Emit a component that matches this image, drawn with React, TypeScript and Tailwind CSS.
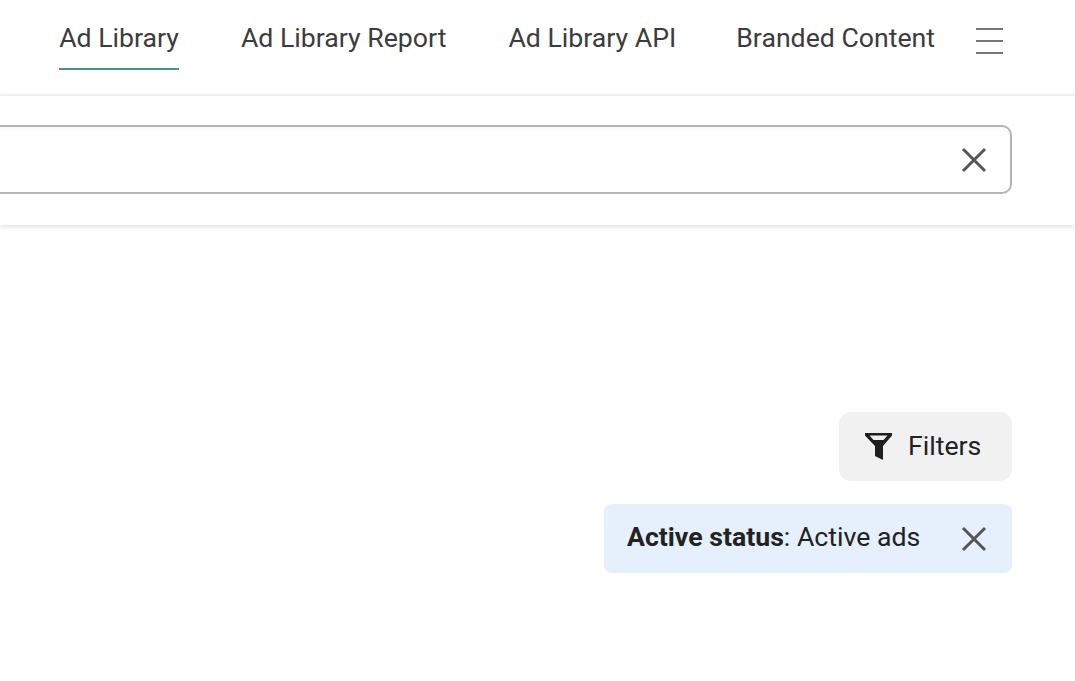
const navItems = ["Ad Library", "Ad Library Report", "Ad Library API", "Branded Content"];

function CloseIcon() {
  return (
    <svg width="28" height="28" viewBox="0 0 28 28" fill="none" stroke="#555555" strokeWidth="3">
      <path d="M3 3 L25 25 M25 3 L3 25" />
    </svg>
  );
}

export default function App() {
  return (
    <div className="h-[681px] w-[1075px] overflow-hidden bg-white font-['Roboto',sans-serif] text-[#3c3c3c]">
      <header className="flex h-[96px] items-start justify-end border-b-2 border-[#f3f3f3] pr-[72px]">
        <nav className="flex gap-[62px] pt-[21px]">
          {navItems.map((item, i) => (
            <a
              key={item}
              className={`block h-[49px] text-[26.67px] leading-[35px] ${i === 0 ? "border-b-2 border-[#4b8f91]" : ""} ${i === 3 ? "-ml-[2px]" : ""}`}
            >
              {item}
            </a>
          ))}
        </nav>
        <button className="ml-[41px] mt-[28px] flex h-[26px] w-[27px] flex-col justify-between">
          <span className="h-[2px] w-full bg-[#757575]" />
          <span className="h-[2px] w-full bg-[#757575]" />
          <span className="h-[2px] w-full bg-[#757575]" />
        </button>
      </header>

      <div className="flex h-[129px] items-start justify-end pr-[63px] pt-[29px] shadow-[0_2px_5px_rgba(0,0,0,0.12)]">
        <div className="-ml-6 flex h-[69px] flex-1 items-center justify-end rounded-[10px] border-2 border-[#b5b5b5] pr-[22px] shadow-[inset_0_3px_3px_rgba(0,0,0,0.02)]">
          <CloseIcon />
        </div>
      </div>

      <div className="flex flex-col items-end pr-[63px] pt-[187px]">
        <button className="flex h-[69px] w-[173px] items-center rounded-[12px] bg-[#f1f1f1] pl-[25px] text-[26.67px] text-[#222222]">
          <svg width="29" height="29" viewBox="0 0 29 29" fill="#1f1f1f">
            <path d="M1 1 H28 V3.5 L19 14 V28 L11 24 V14 L1 3.5 Z M5.5 3.5 H23.5 L19.5 8 H9.5 Z" fillRule="evenodd" />
          </svg>
          <span className="-mt-[2px] ml-[15px]">Filters</span>
        </button>
        <div className="mt-[23px] flex h-[69px] w-[408px] items-center justify-between rounded-[8px] bg-[#e5f0fc] pl-[23px] pr-[24px] text-[26.67px] text-[#222222]">
          <span className="-mt-[4px]">
            <b className="font-bold">Active status</b>: Active ads
          </span>
          <CloseIcon />
        </div>
      </div>
    </div>
  );
}
